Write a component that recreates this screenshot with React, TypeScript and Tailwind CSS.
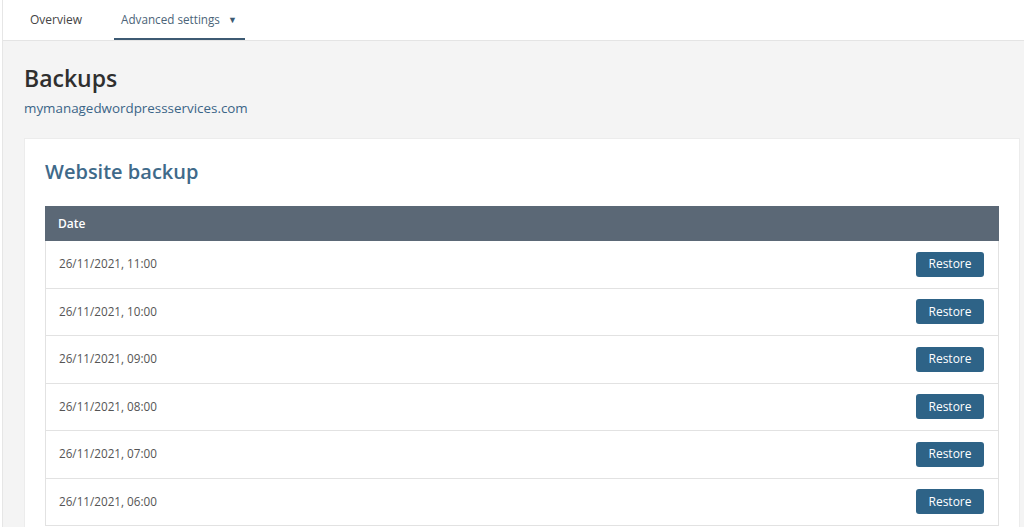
import React from "react";

const rows = ["11:00", "10:00", "09:00", "08:00", "07:00", "06:00"];

export default function App() {
  return (
    <div
      className="flex h-[527px] w-[1024px] overflow-hidden bg-[#f4f4f4]"
      style={{ fontFamily: '"Open Sans", "Noto Sans", sans-serif' }}
    >
      <div className="w-[3px] shrink-0 border-r border-[#e6e6e6] bg-white" />
      <div className="flex min-w-0 flex-1 flex-col">
        <div className="flex h-[41px] shrink-0 items-stretch border-b border-[#e4e4e4] bg-white pl-[11px]">
          <div className="flex items-center px-[16px] text-[12px] text-[#444]">Overview</div>
          <div className="ml-[16px] flex items-center border-b-2 border-[#3d5a73] pl-[7px] pr-[8px] pt-[2px] text-[11.7px] text-[#4b6478]">
            <span>Advanced settings</span>
            <span className="ml-[8px] text-[9px] text-[#3d5a73]">▼</span>
          </div>
        </div>
        <div className="flex flex-col pl-[21px] pr-[4px]">
          <h1 className="mt-[21px] text-[23px] font-semibold leading-[32px] text-[#2f2f2f]">Backups</h1>
          <div className="mt-[4px] text-[13.4px] leading-[20px] text-[#3b6587]">mymanagedwordpressservices.com</div>
          <div className="mt-[20px] border border-[#ececec] bg-white px-[20px] pt-[19px] pb-[20px]">
            <h2 className="text-[20px] font-semibold leading-[28px] text-[#3f6a8a]">Website backup</h2>
            <div className="mt-[20px]">
              <div className="flex h-[35px] items-center bg-[#5b6876] px-[13px] text-[12px] font-semibold text-white">
                Date
              </div>
              {rows.map((t) => (
                <div
                  key={t}
                  className="flex h-[47.5px] items-center justify-between border-x border-b border-[#e2e2e2] pl-[13px] pr-[14px]"
                >
                  <span className="text-[11.7px] text-[#555]">26/11/2021, {t}</span>
                  <button className="h-[25px] w-[68px] rounded-[3px] bg-[#2e6387] text-[12px] text-white">
                    Restore
                  </button>
                </div>
              ))}
            </div>
          </div>
        </div>
      </div>
    </div>
  );
}
